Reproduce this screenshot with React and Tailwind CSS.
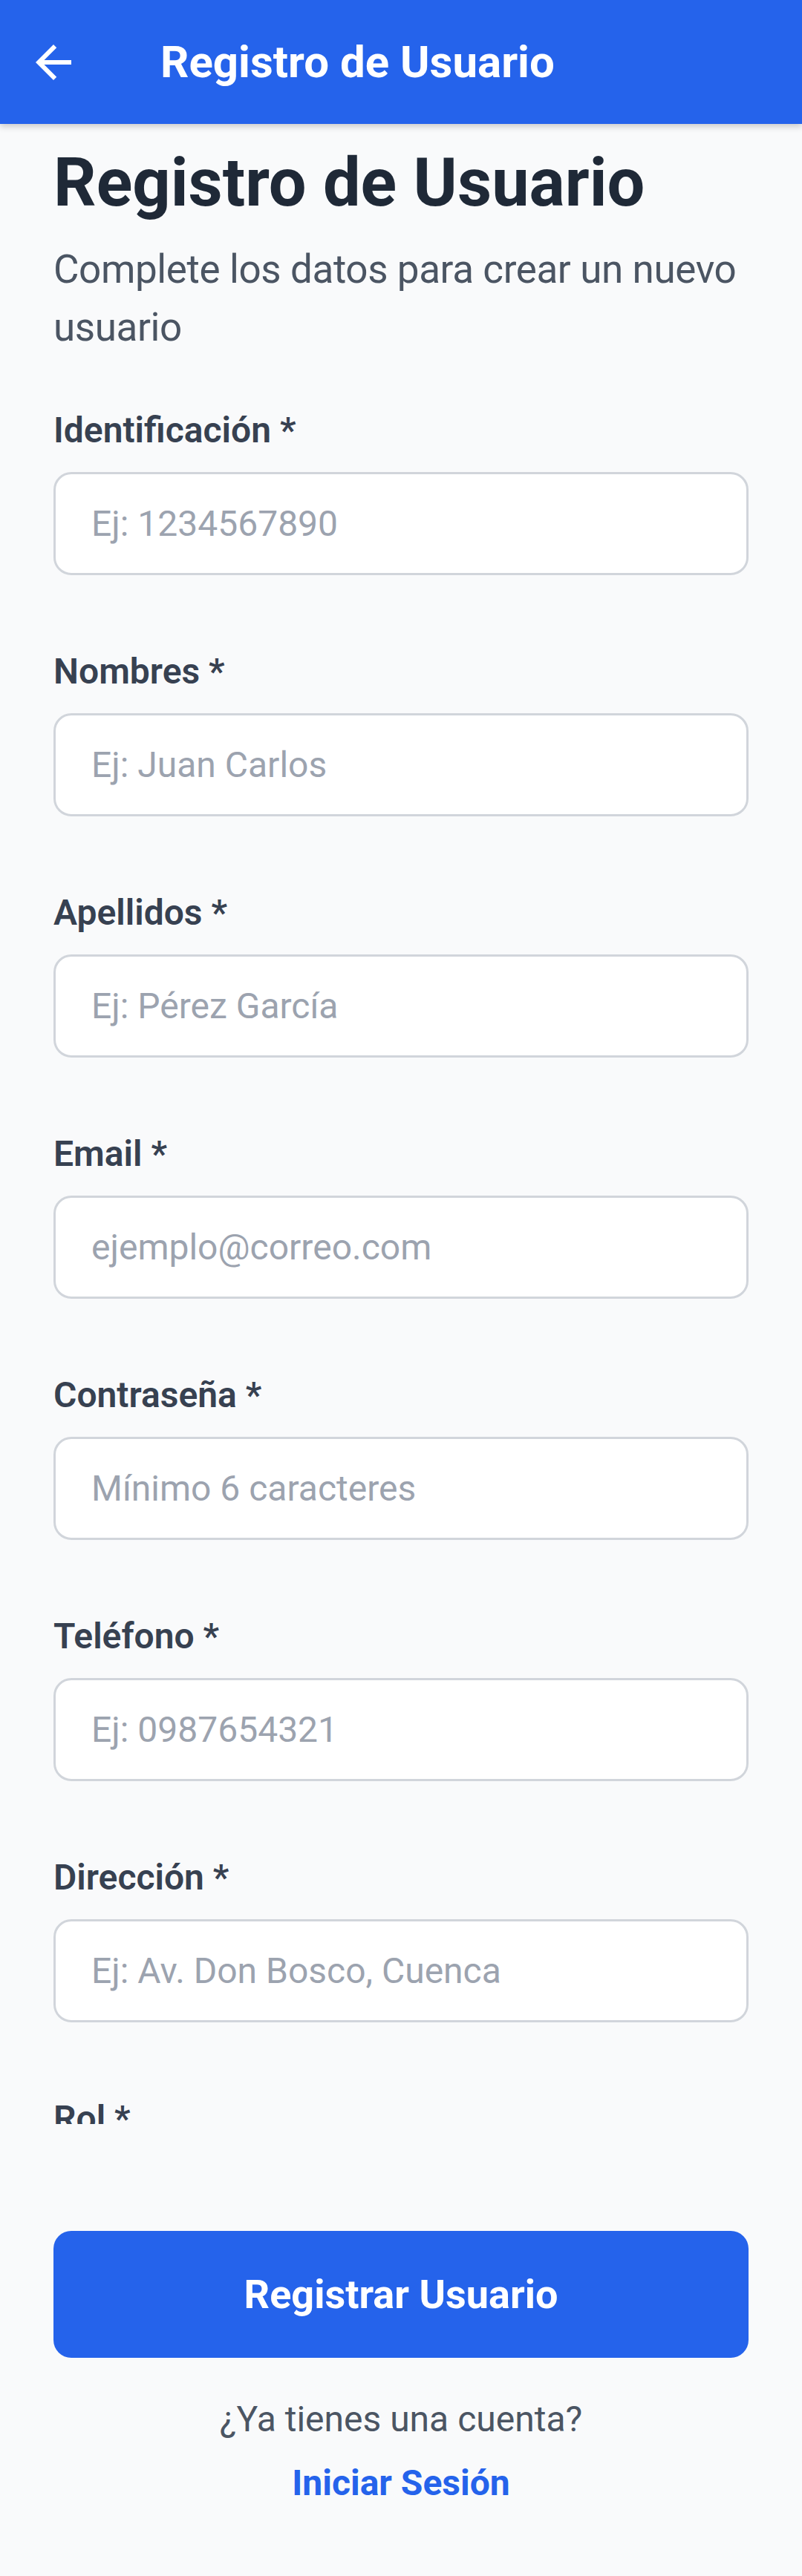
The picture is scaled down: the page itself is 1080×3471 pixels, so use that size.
import React from 'react';

const fields = [
  { label: 'Identificación *', placeholder: 'Ej: 1234567890', type: 'text' },
  { label: 'Nombres *', placeholder: 'Ej: Juan Carlos', type: 'text' },
  { label: 'Apellidos *', placeholder: 'Ej: Pérez García', type: 'text' },
  { label: 'Email *', placeholder: 'ejemplo@correo.com', type: 'email' },
  { label: 'Contraseña *', placeholder: 'Mínimo 6 caracteres', type: 'password' },
  { label: 'Teléfono *', placeholder: 'Ej: 0987654321', type: 'tel' },
  { label: 'Dirección *', placeholder: 'Ej: Av. Don Bosco, Cuenca', type: 'text' },
];

function BackIcon() {
  return (
    <svg width="72" height="72" viewBox="0 0 24 24" fill="#ffffff">
      <path d="M20 11H7.83l5.59-5.59L12 4l-8 8 8 8 1.41-1.41L7.83 13H20v-2z" />
    </svg>
  );
}

function Field({ label, placeholder, type }) {
  return (
    <div className="flex flex-col mb-[102px]">
      <label className="text-[48px] leading-[56px] font-semibold text-[#374151] mb-[28px]">{label}</label>
      <input
        type={type}
        placeholder={placeholder}
        className="h-[139px] w-full rounded-[24px] border-[3px] border-[#d1d5db] bg-white px-[48px] text-[48px] text-[#1f2937] placeholder:text-[#9ca3af] outline-none"
      />
    </div>
  );
}

export default function App() {
  return (
    <div className="h-[3471px] w-[1080px] flex flex-col bg-[#f9fafb] font-['Roboto',sans-serif] overflow-hidden">
      {/* App bar */}
      <header className="relative z-10 h-[167px] shrink-0 bg-[#2563eb] flex items-center shadow-[0_4px_8px_rgba(0,0,0,0.18)]">
        <button className="w-[72px] h-[72px] ml-[36px] flex items-center justify-center">
          <BackIcon />
        </button>
        <h1 className="ml-[108px] text-[60px] leading-[72px] font-bold text-white">Registro de Usuario</h1>
      </header>

      {/* Scroll area, the form continues below the fold */}
      <main className="h-[2695px] shrink-0 overflow-hidden px-[72px] pt-[27px]">
        <h2 className="text-[90px] leading-[106px] font-bold text-[#1f2937]">Registro de Usuario</h2>
        <p className="mt-[24px] mb-[72px] text-[53px] leading-[78px] tracking-[-0.4px] text-[#4b5563]">
          Complete los datos para crear un nuevo usuario
        </p>

        {fields.map((f) => (
          <Field key={f.label} {...f} />
        ))}

        <div className="flex flex-col">
          <label className="text-[48px] leading-[56px] font-semibold text-[#374151] mb-[28px]">Rol *</label>
          <div className="h-[139px] w-full rounded-[24px] border-[3px] border-[#d1d5db] bg-white" />
        </div>
      </main>

      {/* Footer */}
      <footer className="flex flex-col items-center px-[72px] pt-[144px]">
        <button className="w-full h-[171px] rounded-[24px] bg-[#2563eb] text-white text-[54px] font-bold">
          Registrar Usuario
        </button>
        <p className="mt-[55px] text-[48px] leading-[56px] text-[#4b5563]">¿Ya tienes una cuenta?</p>
        <a className="mt-[30px] text-[48px] leading-[56px] font-bold text-[#2563eb]">Iniciar Sesión</a>
      </footer>
    </div>
  );
}
